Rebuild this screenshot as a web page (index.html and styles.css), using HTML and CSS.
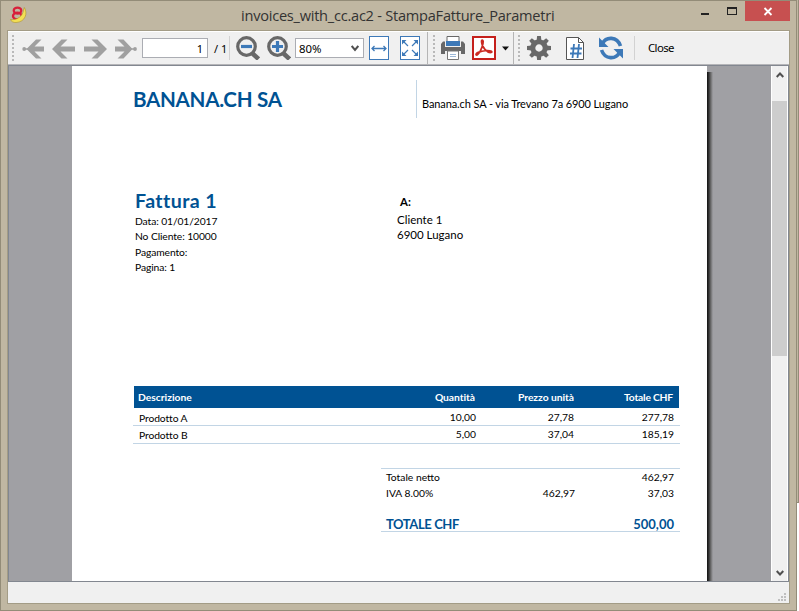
FILE: index.html
```html
<!DOCTYPE html>
<html lang="it">
<head>
<meta charset="utf-8">
<title>invoices_with_cc.ac2 - StampaFatture_Parametri</title>
<link rel="stylesheet" href="styles.css">
</head>
<body>
<div class="desktop">
<div class="window">
  <header class="titlebar">
    <svg class="app-icon" width="18" height="18" viewBox="0 0 18 18">
      <ellipse cx="7.500" cy="4.600" rx="3.800" ry="3" fill="none" stroke="#d8203a" stroke-width="2.200"/>
      <ellipse cx="7.300" cy="10" rx="4.300" ry="3.200" fill="none" stroke="#d8203a" stroke-width="2.400"/>
      <path d="M14.300 1.500C18 7 15.500 16 6 16.500C3.500 16.700 1 15.500 .500 13.500C7 14.500 13 10 13.500 4Z" fill="#f3df55" stroke="#ad942f" stroke-width=".6"/>
    </svg>
    <h1 class="title">invoices_with_cc.ac2 - StampaFatture_Parametri</h1>
    <div class="controls">
      <svg width="89" height="21" viewBox="0 0 89 21" shape-rendering="crispEdges">
        <rect x="0" y="13" width="8" height="2" fill="#222"/>
        <path d="M26 7h10v8H26zM27 9v5h8V9z" fill="#222" fill-rule="evenodd"/>
        <rect x="44" y="1" width="45" height="20" fill="#c75050"/>
        <path d="M63.500 8l7 7M70.500 8l-7 7" stroke="#fff" stroke-width="1.800" shape-rendering="auto"/>
      </svg>
    </div>
  </header>
  <div class="client">
    <nav class="toolbar">
      <i class="grip g1"></i>
      <svg class="arrow first" width="24" height="20" viewBox="0 0 24 20"><path d="M4.500 10L14 .500H19.500L12.500 7.500H22V12.500H12.500L19.500 19.500H14Z" fill="#a0a0a0"/><circle cx="2.200" cy="10" r="1.900" fill="#a0a0a0"/><path d="M3 10h3" stroke="#a0a0a0" stroke-width="1.500"/></svg>
      <svg class="arrow prev" width="24" height="20" viewBox="0 0 24 20"><path d="M0 10L9.500 .500H15.500L8.500 7.500H23V12.500H8.500L15.500 19.500H9.500Z" fill="#a0a0a0"/></svg>
      <svg class="arrow next" width="24" height="20" viewBox="0 0 24 20"><path d="M23 10L13.500 .500H7.500L14.500 7.500H0V12.500H14.500L7.500 19.500H13.500Z" fill="#a0a0a0"/></svg>
      <svg class="arrow last" width="24" height="20" viewBox="0 0 24 20"><path d="M17.500 10L8.500 .500H2.500L9.500 7.500H0V12.500H9.500L2.500 19.500H8.500Z" fill="#a0a0a0"/><circle cx="20" cy="10" r="1.900" fill="#a0a0a0"/><path d="M16 10h4" stroke="#a0a0a0" stroke-width="1.500"/></svg>
      <div class="page-input">1</div>
      <span class="page-total">/ 1</span>
      <i class="sep s1"></i>
      <svg class="zoom-out" width="24" height="24" viewBox="0 0 24 24"><path d="M16 17l6.500 6" stroke="#686868" stroke-width="4.500"/><circle cx="10.500" cy="10.500" r="8.800" fill="#f0f0f0" stroke="#686868" stroke-width="3.200"/><path d="M5 10.500h11" stroke="#3d79b8" stroke-width="3.200"/></svg>
      <svg class="zoom-in" width="24" height="24" viewBox="0 0 24 24"><path d="M16 17l6.500 6" stroke="#686868" stroke-width="4.500"/><circle cx="10.500" cy="10.500" r="8.800" fill="#f0f0f0" stroke="#686868" stroke-width="3.200"/><path d="M5 10.500h11M10.500 5v11" stroke="#3d79b8" stroke-width="3.200"/></svg>
      <div class="combo"><span>80%</span><svg width="8" height="7" viewBox="0 0 8 7"><path d="M.7 1l3.300 4L7.300 1" fill="none" stroke="#505050" stroke-width="2"/></svg></div>
      <svg class="fit-width" width="20" height="24" viewBox="0 0 20 24"><rect x=".5" y=".5" width="19" height="23" fill="#fff" stroke="#3d79b8"/><path d="M3 12.500h14M5.500 10L3 12.500L5.500 15M14.500 10L17 12.500L14.500 15" fill="none" stroke="#3d79b8" stroke-width="1.300"/></svg>
      <svg class="fit-page" width="20" height="24" viewBox="0 0 20 24"><rect x=".5" y=".5" width="19" height="23" fill="#fff" stroke="#3d79b8"/><path d="M8 10L3 5M12 10l5-5M8 14l-5 5M12 14l5 5" stroke="#3d79b8" stroke-width="1.200"/><path d="M2 4h4.500L2 8.500zM18 4h-4.500l4.500 4.500zM2 20h4.500l-4.500-4.500zM18 20h-4.500l4.500-4.500z" fill="#3d79b8"/></svg>
      <i class="edge e1"></i>
      <i class="grip g2"></i>
      <svg class="printer" width="24" height="24" viewBox="0 0 24 24"><path d="M6 6V.5h12V6" fill="#fff" stroke="#686868"/><path d="M2 5.500h2V11h16V5.500h2L24 8v10h-4v-3H4v3H0V8z" fill="#686868"/><rect x="5" y="5" width="14" height="5" fill="#3d79b8"/><path d="M6.500 15h11v8.500h-11z" fill="#fff" stroke="#777"/><path d="M9 18.500h6M9 20.500h6" stroke="#9db9d9"/></svg>
      <svg class="pdf" width="24" height="24" viewBox="0 0 24 24"><rect x="1" y="1" width="22" height="22" fill="#fff" stroke="#c5201c" stroke-width="2"/><path d="M9.500 5C9.500 3.500 12 3.500 11 7.500C10 12.500 6.500 19.500 4.300 19C2.500 17.500 8 15 14.500 14.500C19.500 14.300 21 16 19 16.500C15.500 17 9.500 11.500 9.500 5Z" fill="none" stroke="#cb2a22" stroke-width="1.700"/></svg>
      <svg class="caret" width="7" height="5" viewBox="0 0 7 5"><path d="M0 .500h7L3.500 4.500z" fill="#111"/></svg>
      <i class="edge e2"></i>
      <i class="grip g3"></i>
      <svg class="gear" width="24" height="24" viewBox="-12 -12 24 24"><g fill="#686868"><path id="tooth" d="M-2.400-7L-1.900-12H1.900L2.400-7z"/><use href="#tooth" transform="rotate(45)"/><use href="#tooth" transform="rotate(90)"/><use href="#tooth" transform="rotate(135)"/><use href="#tooth" transform="rotate(180)"/><use href="#tooth" transform="rotate(225)"/><use href="#tooth" transform="rotate(270)"/><use href="#tooth" transform="rotate(315)"/></g><circle r="6.200" fill="none" stroke="#686868" stroke-width="5"/></svg>
      <svg class="number" width="18" height="23" viewBox="0 0 18 23"><path d="M.5.500h12l5 5v17H.5z" fill="#fff" stroke="#555"/><path d="M12.500.500v5h5" fill="none" stroke="#555"/><path d="M8 7L6.500 21M13 7L11.500 21M4.500 11.500h11.500M4 16.500h11.500" stroke="#3d79b8" stroke-width="1.800"/></svg>
      <svg class="refresh" width="24" height="24" viewBox="0 0 24 24"><path d="M3.500 7.500C7 .5 18 0 21.500 10M20.500 16.500C17 23.500 6 24 2.500 14" fill="none" stroke="#3d79b8" stroke-width="3.600"/><path d="M0 1.500V11h9.500zM24 22.500V13H14.500z" fill="#3d79b8"/></svg>
      <i class="sep s2"></i>
      <span class="close">Close</span>
    </nav>
    <div class="view">
      <main class="page">
        <section class="head">
          <div class="company">BANANA.CH SA</div>
          <div class="sender">Banana.ch SA - via Trevano 7a 6900 Lugano</div>
        </section>
        <section class="info">
          <div class="details">
            <h2 class="invoice">Fattura 1</h2>
            <p class="p1">Data: 01/01/2017</p><p class="p2">No Cliente: 10000</p><p class="p3">Pagamento:</p><p class="p4">Pagina: 1</p>
          </div>
          <div class="client-address"><b>A:</b><p class="a1">Cliente 1</p><p class="a2">6900 Lugano</p></div>
        </section>
        <section class="items">
          <div class="row thead"><span class="h1">Descrizione</span><span class="h2">Quantità</span><span class="h3">Prezzo unità</span><span class="h4">Totale CHF</span></div>
          <div class="row item first-item"><span>Prodotto A</span><span>10,00</span><span>27,78</span><span>277,78</span></div>
          <div class="row item second-item"><span>Prodotto B</span><span>5,00</span><span>37,04</span><span>185,19</span></div>
        </section>
        <section class="totals">
          <div class="trow net"><span class="t1">Totale netto</span><span></span><span>462,97</span></div>
          <div class="trow vat"><span class="t2">IVA 8.00%</span><span>462,97</span><span>37,03</span></div>
          <div class="trow total"><span class="t3">TOTALE CHF</span><span></span><span class="t4">500,00</span></div>
        </section>
      </main>
      <div class="shadow"></div>
      <div class="scrollbar">
        <svg width="8" height="6" viewBox="0 0 8 6"><path d="M.7 5L4 1.500L7.300 5" fill="none" stroke="#505050" stroke-width="2"/></svg>
        <div class="thumb"></div>
        <svg class="down" width="8" height="6" viewBox="0 0 8 6"><path d="M.7 1L4 4.500L7.300 1" fill="none" stroke="#505050" stroke-width="2"/></svg>
      </div>
    </div>
    <footer class="status">
      <svg width="8" height="8" viewBox="0 0 8 8" fill="#bfbfbf" shape-rendering="crispEdges"><path d="M6 0h2v2H6zM3 3h2v2H3zM6 3h2v2H6zM0 6h2v2H0zM3 6h2v2H3zM6 6h2v2H6z"/></svg>
    </footer>
  </div>
</div>
<div class="behind"></div>
</div>
</body>
</html>
```

FILE: styles.css
```css
* { box-sizing: border-box; }
body, p, h1, h2 { margin: 0; font-weight: normal; }
body { background: #fff; overflow: hidden; }
svg { display: block; flex: none; }
.desktop { display: flex; width: 799px; height: 611px; }
.window { width: 797px; height: 611px; flex: none; padding: 0 6px; background: #c0b7a2; border: 1px solid #938c78; }
.behind { width: 2px; height: 503px; background: #c0b7a2; border-right: 1px solid #938c78; border-bottom: 1px solid #938c78; }

.titlebar { display: flex; height: 29px; }
.app-icon { margin: 5px 0 0 3px; }
.title { flex: none; margin-left: 213px; width: 330px; white-space: nowrap; font: 14.6px/29px "Open Sans", sans-serif; letter-spacing: -0.25px; color: #333; }
.controls { margin: -1px 0 0 130px; }

.client { width: 783px; height: 574px; border: 1px solid #a39c86; }
.toolbar { display: flex; align-items: flex-start; height: 34px; background: #f0f0f0; border-top: 1px solid #fff; border-bottom: 1px solid #b5b5b8; font: 11px/13px "Noto Sans", sans-serif; color: #000; }
.toolbar > * { flex: none; }
.grip { width: 2px; height: 26px; margin-top: 3px; background: repeating-linear-gradient(#b9b9b9 0 2px, #f0f0f0 2px 4px); }
.g1 { margin-left: 4px; }
.arrow { margin-top: 7px; }
.first { margin-left: 8px; }
.prev { margin-left: 6px; }
.next { margin-left: 8px; }
.last { margin-left: 7px; }
.page-input { margin: 6px 0 0 3px; width: 66px; height: 20px; background: #fff; border: 1px solid #abadb3; text-align: right; padding-right: 4px; line-height: 20px; }
.page-total { margin: 10px 0 0 6px; width: 15px; white-space: nowrap; }
.sep { width: 1px; height: 24px; margin-top: 4px; background: #d2d2d2; }
.zoom-out, .zoom-in, .fit-width, .fit-page, .printer, .pdf, .gear, .refresh { margin-top: 4px; }
.zoom-out { margin-left: 6px; }
.zoom-in { margin-left: 7px; }
.combo { display: flex; justify-content: space-between; align-items: center; margin: 6px 0 0 4px; width: 69px; height: 20px; padding: 1px 4px 0 3px; background: #fff; border: 1px solid #abadb3; font-size: 11.4px; }
.fit-width { margin-left: 5px; }
.fit-page { margin-left: 11px; }
.edge { width: 1px; height: 32px; background: #b5b5b5; }
.e1 { margin-left: 7px; }
.g2 { margin-left: 5px; }
.printer { margin-left: 6px; }
.pdf { margin-left: 7px; }
.caret { margin: 14px 0 0 6px; }
.e2 { margin-left: 4px; }
.g3 { margin-left: 4px; }
.gear { margin-left: 7px; }
.number { margin: 5px 0 0 15px; }
.refresh { margin-left: 15px; }
.s2 { margin-left: 11px; }
.close { margin: 9px 0 0 13px; font-size: 11.4px; letter-spacing: -0.6px; }

.view { display: flex; height: 517px; background: #a0a0a4; border: 1px solid #828790; }
.page { margin-left: 63px; width: 635px; height: 515px; background: #fff; color: #000; font: 10.3px/15px Lato, sans-serif; white-space: nowrap; }
.shadow { width: 6px; margin-top: 6px; background: linear-gradient(90deg, #111, #333 30%, #666 60%, #a0a0a4); }
.scrollbar { margin-left: 58px; width: 17px; background: #f0f0f0; border: solid #fff; border-width: 0 1px; display: flex; flex-direction: column; align-items: center; padding-top: 6px; }
.thumb { width: 15px; height: 255px; margin-top: 23px; background: #cdcdcd; }
.down { margin: auto 0 5px; }
.status { display: flex; justify-content: flex-end; align-items: flex-end; height: 21px; background: #f0f0f0; padding: 0 3px 2px 0; }

.head { display: flex; height: 52px; padding-top: 14px; }
.company { margin-left: 61px; width: 283px; font-size: 20.6px; line-height: 38px; letter-spacing: -0.3px; font-weight: bold; color: #005293; }
.sender { border-left: 1px solid #c2d5e5; padding-left: 5px; font-size: 11px; letter-spacing: -0.1px; line-height: 48px; }
.info { display: flex; height: 268px; padding-top: 71px; }
.details { margin-left: 63px; width: 262px; letter-spacing: -0.1px; }
.invoice { margin-bottom: 1px; font-size: 19.6px; line-height: 24px; letter-spacing: 0.4px; font-weight: bold; color: #005293; }
.details p { line-height: 15.3px; }
.client-address { font-size: 11.5px; }
.client-address b { display: block; margin: 5px 0 3px 3px; font-size: 11.4px; }
.client-address p { line-height: 15px; }
.items { margin-left: 61px; width: 547px; }
.row { display: grid; grid-template-columns: 247px 99px 100px 101px; height: 18px; border-bottom: 1px solid #c2d5e5; line-height: 18px; padding-right: 6px; }
.row span + span { text-align: right; padding-right: 3px; }
.row span:nth-child(3) { padding-right: 5px; }
.row span:nth-child(4) { padding-right: 6px; }
.item span:first-child { padding-left: 6px; letter-spacing: -0.1px; }
.first-item span:first-child { line-height: 20px; }
.second-item span + span { line-height: 17px; }
.row.thead { margin: 0 1px; height: 22px; border: 0; background: #005293; color: #fff; font-weight: bold; line-height: 23px; padding-left: 4px; grid-template-columns: 242px 99px 100px 100px; }
.thead .h2, .thead .h3 { letter-spacing: -0.05px; }
.thead .h2 { padding-right: 4px; }
.thead .h4 { letter-spacing: -0.2px; padding-right: 5px; }
.totals { margin: 24px 0 0 309px; width: 299px; border-top: 1px solid #c2d5e5; border-bottom: 1px solid #c2d5e5; height: 64px; }
.trow { display: grid; grid-template-columns: 99px 100px 100px; padding-left: 5px; height: 16px; line-height: 17px; }
.trow span + span { text-align: right; padding-right: 10px; }
.trow span:nth-child(3) { padding-right: 11px; }
.total { margin-top: 14px; line-height: 19px; font-size: 13px; font-weight: bold; color: #005293; }
.total .t3 { letter-spacing: -0.4px; }
```
